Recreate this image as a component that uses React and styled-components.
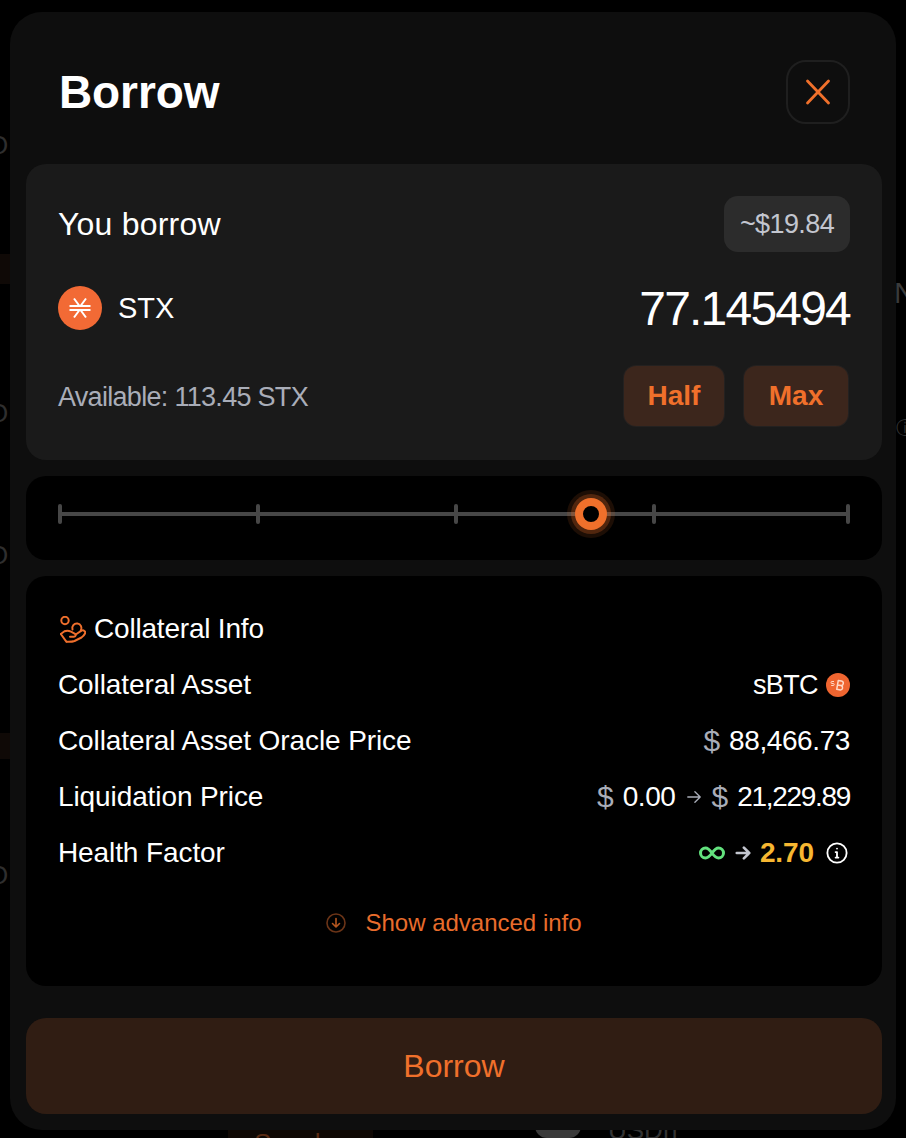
import React from 'react';
import styled, { createGlobalStyle } from 'styled-components';

const Global = createGlobalStyle`
  html, body { margin: 0; padding: 0; background: #000; }
  body { font-family: "Liberation Sans", Arial, sans-serif; color: #fff; }
  * { box-sizing: border-box; }
`;
const Page = styled.div`
  position: relative; width: 906px; height: 1138px; overflow: hidden; background: #000;
  padding: 12px 10px 8px;
`;
const Modal = styled.section`
  position: relative; height: 1118px; background: #0e0e0e; border-radius: 32px; padding: 0 14px 16px 16px;
  display: flex; flex-direction: column;
`;
const Header = styled.header`
  height: 152px; display: flex; align-items: center; justify-content: space-between; padding: 8px 32px 0 33px;
`;
const Title = styled.h1`
  margin: 0; font-size: 46px; font-weight: 700; letter-spacing: -0.1px; line-height: 1;
`;
const CloseBtn = styled.button`
  width: 64px; height: 64px; border-radius: 20px; border: 2px solid #1f1f1f; background: transparent;
  display: flex; align-items: center; justify-content: center; padding: 0;
`;
const Panel = styled.div`
  background: ${p => p.$dark ? '#000' : '#1a1a1a'}; border-radius: 20px;
`;
const BorrowPanel = styled(Panel)`
  height: 296px; padding: 32px 32px 0; display: flex; flex-direction: column;
`;
const Row = styled.div`
  display: flex; align-items: center; justify-content: space-between; height: ${p => p.$h || 56}px; margin-top: ${p => p.$mt || 0}px;
`;
const Label = styled.span`font-size: 32px; letter-spacing: 0.2px;`;
const Badge = styled.span`
  width: 126px; height: 56px; border-radius: 14px; background: #2c2c2c; color: #c3c6cf;
  display: flex; align-items: center; justify-content: center; font-size: 27px; letter-spacing: -0.6px;
`;
const Token = styled.div`display: flex; align-items: center; gap: 16px;`;
const TokenName = styled.span`font-size: 29px;`;
const Amount = styled.span`font-size: 48px; letter-spacing: -1.8px;`;
const Available = styled.span`font-size: 27px; color: #a9adb8; letter-spacing: -0.7px; padding-top: 2px;`;
const Quick = styled.div`display: flex; gap: 20px; margin-right: 2px;`;
const QuickBtn = styled.button`
  width: ${p => p.$w}px; height: 60px; border: 0; border-radius: 12px; background: #3c261c; color: #f0702b;
  font: 700 28px "Liberation Sans", Arial, sans-serif; padding: 0; box-shadow: 0 0 0 1px #242120;
`;
const SliderPanel = styled(Panel)`
  height: 84px; margin-top: 16px; padding: 0 32px 8px; display: flex; align-items: center;
`;
const Track = styled.div`
  position: relative; width: 100%; height: 20px; display: flex; align-items: center;
  &::before { content: ''; position: absolute; left: 2px; right: 2px; top: 8px; height: 4px; background: #474747; }
`;
const Tick = styled.i`
  position: relative; flex: none; width: 4px; height: 20px; background: #474747; border-radius: 2px;
  margin-right: ${p => p.$gap}px;
`;
const Thumb = styled.div`
  position: absolute; left: 517px; top: -6px; width: 32px; height: 32px; border-radius: 50%;
  background: #000; border: 8px solid #f0702b;
  box-shadow: 0 0 0 4px rgba(240,112,43,.25), 0 0 0 8px rgba(240,112,43,.12);
`;
const InfoPanel = styled(Panel)`
  height: 410px; margin-top: 16px; padding: 25px 32px 0; display: flex; flex-direction: column;
`;
const InfoHead = styled.div`display: flex; align-items: center; gap: 8px; height: 56px; font-size: 28px; letter-spacing: -0.2px;
  svg { margin-left: 2px; }
`;
const InfoRow = styled.div`
  height: 56px; display: flex; align-items: center; justify-content: space-between; font-size: 28px; letter-spacing: -0.1px;
`;
const Value = styled.span`display: flex; align-items: center; gap: ${p => p.$gap || 0}px;`;
const Num = styled.span`letter-spacing: ${p => p.$tight ? '-1.3px' : '-0.4px'};`;
const AssetName = styled.span`font-size: 27px; letter-spacing: -0.6px;`;
const Dollar = styled.span`color: #a9adb8; font-size: 30px; margin-right: 9px;`;
const Arrow = styled.span`display: inline-flex; margin: 0 ${p => p.$right ?? 10}px 0 10px;`;
const Health = styled.span`color: #f7b731; font-weight: 700; margin: 0 12px 0 0;`;
const InfoBox = styled.span`display: inline-flex; margin-right: 2px;`;
const Advanced = styled.button`
  margin-top: 14px; height: 56px; background: none; border: 0; color: #e96c2c; padding: 0;
  font: 24px "Liberation Sans", Arial, sans-serif; display: flex; align-items: center; justify-content: center; gap: 19px;
`;
const Submit = styled.button`
  margin-top: 32px; height: 96px; border: 0; border-radius: 20px; background: #301d13; color: #f0702b;
  font: 32px "Liberation Sans", Arial, sans-serif; padding: 0; width: 856px;
`;
const Ghost = styled.span`
  position: absolute; left: ${p => p.$x}px; top: ${p => p.$y}px; color: ${p => p.$c || '#333'}; font-size: ${p => p.$s || 26}px; line-height: 1;
`;
const GhostBlock = styled.div`
  position: absolute; left: ${p => p.$x}px; top: ${p => p.$y}px; width: ${p => p.$w}px; height: ${p => p.$h}px;
  background: ${p => p.$c}; border-radius: ${p => p.$r || '0'};
`;

const StxIcon = () => (
  <svg width="44" height="44" viewBox="0 0 44 44"><circle cx="22" cy="22" r="22" fill="#f26a35"/>
    <g stroke="#fff" strokeWidth="2" fill="none">
      <path d="M11.500 20h21M11.500 24h21"/><path d="M16 12.500l5.500 7.500M28 12.500l-5.500 7.500M16 31.500l5.500-7.500M28 31.500l-5.500-7.500"/>
    </g></svg>
);
const BtcIcon = () => (
  <svg width="24" height="24" viewBox="0 0 24 24"><circle cx="12" cy="12" r="12" fill="#ef6530"/>
    <g stroke="#ffd9c6" fill="none" strokeLinecap="round" transform="rotate(10 12 12)">
      <path d="M11.500 7.500v9M11.500 7.500h3.200a2.200 2.200 0 0 1 0 4.500h-3.200M11.500 12h3.700a2.300 2.300 0 0 1 0 4.500h-3.700" strokeWidth="1.500"/>
    </g>
    <path d="M8 8.500H6a1 1 0 0 0 0 2h1.200a1 1 0 0 1 0 2H5.200" stroke="#ffd9c6" strokeWidth="1" fill="none"/>
  </svg>
);
const HandIcon = () => (
  <svg width="26" height="27" viewBox="0 0 26 27" fill="none" stroke="#ef6f2c" strokeWidth="2" strokeLinecap="round" strokeLinejoin="round">
    <circle cx="5" cy="4.500" r="3.700"/>
    <path d="M12.500 13.500A4.600 4.600 0 1 1 20.800 14.500"/>
    <path d="M.8 18L4.500 15.300C7 14.300 9 14.700 11 15.700L15 17.800C16.300 18.700 15.500 20.800 13.800 20.800H10"/>
    <path d="M15.700 18.500L21.500 14.700C23.500 13.600 26 15.500 25 17.500C24.300 19 23 20.500 21.500 21.500L14.500 25C12 26 9.500 25.800 7 25.800"/>
    <path d="M.8 18L6.500 25.800"/>
  </svg>
);
const SmallArrow = ({ c = '#a9adb8', w = 2, s = 16 }) => (
  <svg width={s} height={s} viewBox="0 0 18 18" fill="none" stroke={c} strokeWidth={w} strokeLinecap="round" strokeLinejoin="round">
    <path d="M2 9h14M10 3l6 6-6 6"/></svg>
);
const InfinityIcon = () => (
  <svg width="26" height="14" viewBox="0 0 26 14" fill="none" stroke="#63e27e" strokeWidth="3">
    <path d="M13 7C10.500 3.500 8.500 2 6.500 2a5 5 0 0 0 0 10c2 0 4-1.500 6.500-5s4.500-5 6.500-5a5 5 0 0 1 0 10c-2 0-4-1.500-6.500-5z"/></svg>
);
const InfoIcon = () => (
  <svg width="22" height="22" viewBox="0 0 24 24" fill="none" stroke="#fff" strokeWidth="2" strokeLinecap="round">
    <circle cx="12" cy="12" r="10.500"/><path d="M12 11v6M10.500 11H12M10.500 17h3"/><circle cx="12" cy="7.200" r="1" fill="#fff" stroke="none"/>
  </svg>
);
const DownIcon = () => (
  <svg width="20" height="20" viewBox="0 0 20 20" fill="none" stroke="#6b3417" strokeWidth="1.600" strokeLinecap="round" strokeLinejoin="round">
    <circle cx="10" cy="10" r="9"/><path d="M10 5.500v8M6.500 10.500l3.500 3.500 3.500-3.500" stroke="#b5561f"/></svg>
);

const leftArcs = [132, 400, 542, 862];

export default function App() {
  return (
    <Page>
      <Global />
      {leftArcs.map(y => <Ghost key={y} $x={-12} $y={y} $c="#2e2e2e">O</Ghost>)}
      <GhostBlock $x={0} $y={254} $w={10} $h={30} $c="#0f0906" />
      <GhostBlock $x={0} $y={733} $w={10} $h={26} $c="#0f0906" />
      <Ghost $x={894} $y={278} $c="#3a3a3a" $s={30}>N</Ghost>
      <Ghost $x={896} $y={419} $c="#333" $s={18}>ⓘ</Ghost>
      <GhostBlock $x={228} $y={1128} $w={145} $h={10} $c="#0f0804" />
      <Ghost $x={254} $y={1130} $c="#5a2a12">Supply</Ghost>
      <GhostBlock $x={535} $y={1126} $w={46} $h={12} $c="#3a3a3a" $r="0 0 16px 16px" />
      <Ghost $x={608} $y={1117}>USDh</Ghost>
      <Modal>
        <Header>
          <Title>Borrow</Title>
          <CloseBtn aria-label="Close">
            <svg width="28" height="28" viewBox="0 0 28 28" fill="none" stroke="#f0702b" strokeWidth="2.800" strokeLinecap="round"><path d="M3.500 3l21 22M24.500 3l-21 22"/></svg>
          </CloseBtn>
        </Header>
        <BorrowPanel>
          <Row><Label>You borrow</Label><Badge>~$19.84</Badge></Row>
          <Row $mt={28}>
            <Token><StxIcon /><TokenName>STX</TokenName></Token>
            <Amount>77.145494</Amount>
          </Row>
          <Row $mt={30} $h={60}>
            <Available>Available: 113.45 STX</Available>
            <Quick><QuickBtn $w={100}>Half</QuickBtn><QuickBtn $w={104}>Max</QuickBtn></Quick>
          </Row>
        </BorrowPanel>
        <SliderPanel $dark>
          <Track>
            <Tick $gap={194} /><Tick $gap={194} /><Tick $gap={194} /><Tick $gap={190} /><Tick $gap={0} />
            <Thumb />
          </Track>
        </SliderPanel>
        <InfoPanel $dark>
          <InfoHead><HandIcon />Collateral Info</InfoHead>
          <InfoRow><span>Collateral Asset</span><Value $gap={8}><AssetName>sBTC</AssetName><BtcIcon /></Value></InfoRow>
          <InfoRow><span>Collateral Asset Oracle Price</span><Value><Dollar>$</Dollar><Num>88,466.73</Num></Value></InfoRow>
          <InfoRow><span>Liquidation Price</span><Value><Dollar>$</Dollar><Num>0.00</Num><Arrow><SmallArrow w={1.500} /></Arrow><Dollar>$</Dollar><Num $tight>21,229.89</Num></Value></InfoRow>
          <InfoRow><span>Health Factor</span><Value><InfinityIcon /><Arrow $right={9}><SmallArrow c="#c3c6cf" w={3} /></Arrow><Health>2.70</Health><InfoBox><InfoIcon /></InfoBox></Value></InfoRow>
          <Advanced><DownIcon />Show advanced info</Advanced>
        </InfoPanel>
        <Submit>Borrow</Submit>
      </Modal>
    </Page>
  );
}
